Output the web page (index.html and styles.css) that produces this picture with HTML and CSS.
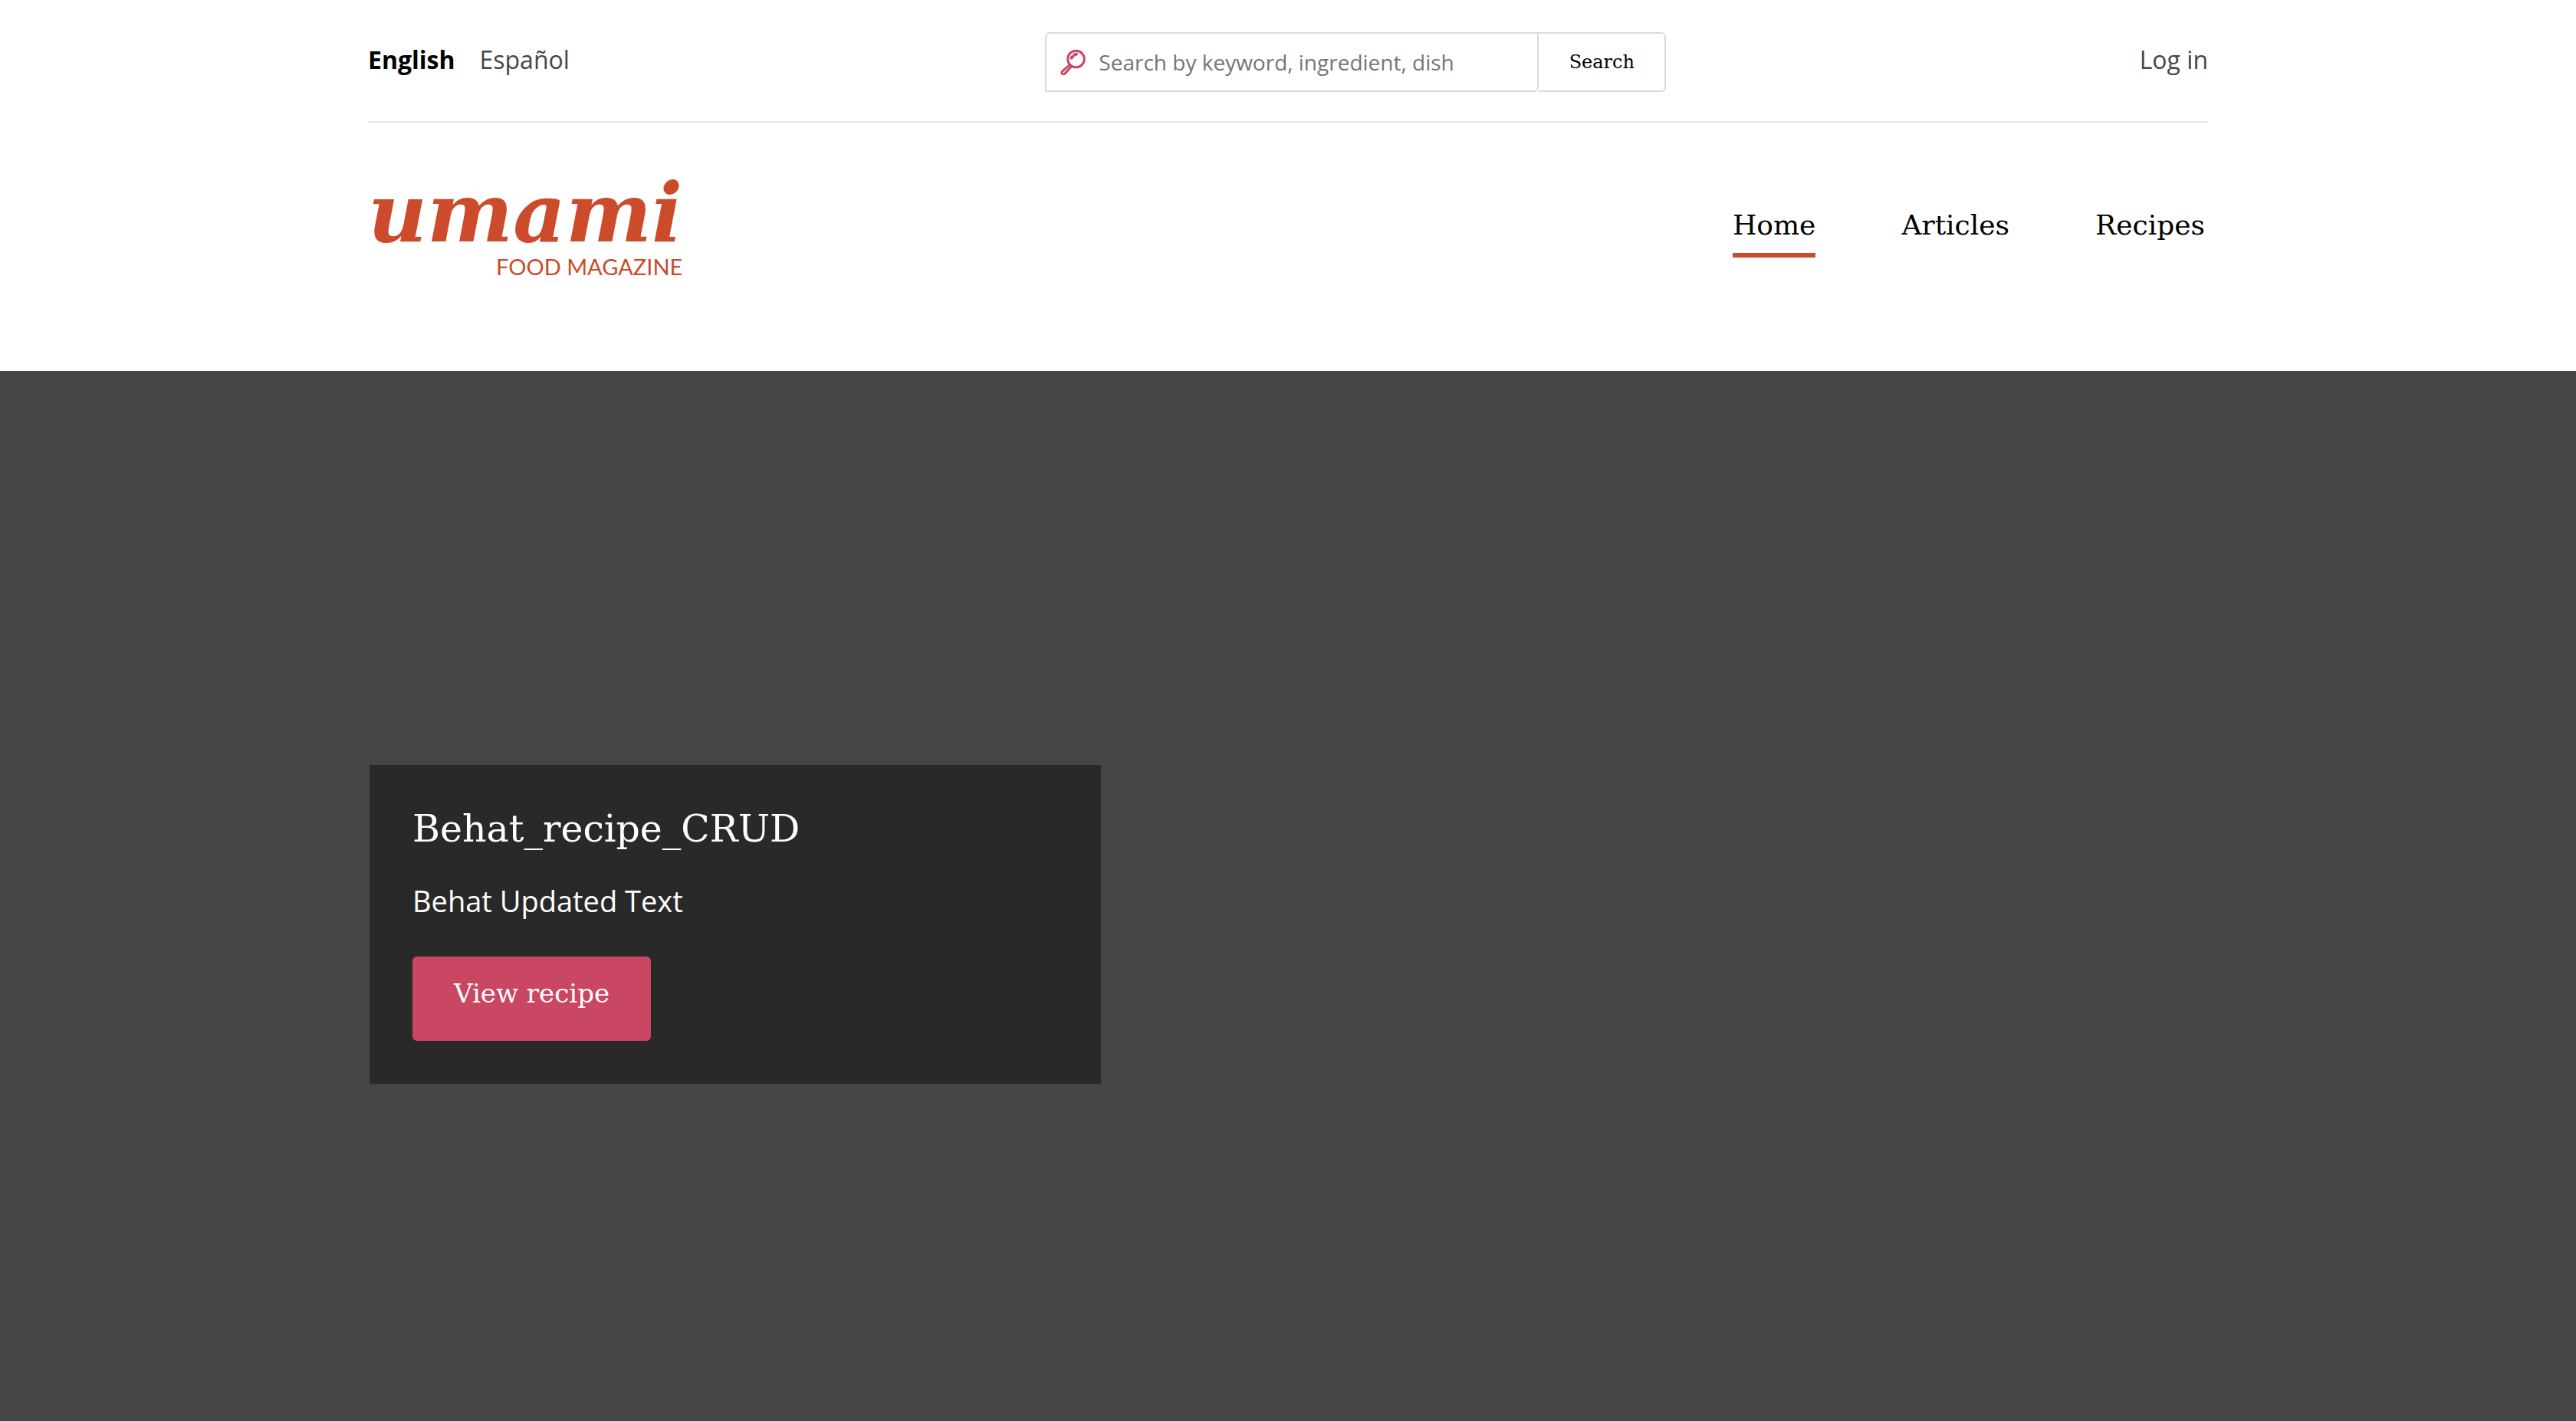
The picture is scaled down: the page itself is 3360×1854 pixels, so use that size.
FILE: index.html
```html
<!DOCTYPE html>
<html lang="en">
<head>
<meta charset="utf-8">
<title>Home | Umami Food Magazine</title>
<link rel="stylesheet" href="styles.css">
</head>
<body>
<header class="header">
  <div class="topbar">
    <nav class="languages" aria-label="Language">
      <a class="language language-active" href="#" lang="en">English</a>
      <a class="language" href="#" lang="es">Español</a>
    </nav>
    <form class="search" role="search">
      <label class="search-field">
        <svg class="search-icon" viewBox="0 0 34 34" aria-hidden="true">
          <circle cx="20.500" cy="13" r="10.800"/>
          <path d="M12.300 20.700 2.500 29a2.200 2.200 0 0 0 3.300 3.200l9-9.800"/>
          <path class="search-shine" d="M14.500 11.500l1.500-1.500M18.500 7.500l2.500-.8"/>
        </svg>
        <input class="search-input" type="search" placeholder="Search by keyword, ingredient, dish" aria-label="Search by keyword, ingredient, dish">
      </label>
      <button class="search-button" type="submit">Search</button>
    </form>
    <a class="login" href="#">Log in</a>
  </div>
  <div class="masthead">
    <a class="brand" href="#">
      <span class="brand-name">umami</span>
      <span class="brand-tag">FOOD MAGAZINE</span>
    </a>
    <nav class="menu" aria-label="Main navigation">
      <a class="menu-link menu-active" href="#">Home</a>
      <a class="menu-link" href="#">Articles</a>
      <a class="menu-link" href="#">Recipes</a>
    </nav>
  </div>
</header>
<main class="hero">
  <section class="card">
    <h1 class="card-title">Behat_recipe_CRUD</h1>
    <p class="card-text">Behat Updated Text</p>
    <a class="card-button" href="#">View recipe</a>
  </section>
</main>
</body>
</html>
```
FILE: styles.css
```css
:root {
  --slab: "DejaVu Serif", serif;
  --sans: "Open Sans", sans-serif;
  --orange: #cb4b2a;
  --pink: #c94762;
}

* {
  box-sizing: border-box;
}

body {
  display: flex;
  flex-direction: column;
  min-height: 100vh;
  margin: 0;
  background: #fff;
  color: #464646;
  font: 32px/48px var(--sans);
}

a {
  color: inherit;
  text-decoration: none;
}

.header {
  padding: 0 calc(100% / 7) 120px;
}

.topbar {
  display: grid;
  grid-template-columns: 5fr 810px 4fr;
  padding: 42px 0 38px;
  border-bottom: 2px solid #e7ebdf;
}

.languages,
.login {
  padding-top: 12px;
}

.languages {
  display: flex;
  gap: 32px;
}

.language-active {
  color: #000;
  font-weight: 700;
}

.search {
  display: flex;
  height: 78px;
}

.search-field {
  display: flex;
  flex: 1;
  align-items: center;
  gap: 16px;
  padding: 0 18px;
  border: 2px solid #dadada;
  border-radius: 6px 0 6px 0;
}

.search-icon {
  width: 34px;
  height: 34px;
  fill: none;
  stroke: var(--pink);
  stroke-width: 3;
}

.search-shine {
  stroke-width: 4;
  stroke-linecap: round;
}

.search-input {
  flex: 1;
  min-width: 0;
  padding: 0;
  border: 0;
  outline: 0;
  background: none;
  color: #464646;
  font: 28px/40px var(--sans);
}

.search-input::placeholder {
  color: #757575;
}

.search-button {
  width: 166px;
  padding: 0;
  border: 2px solid #dadada;
  border-left: 0;
  border-radius: 0 6px 6px 0;
  background: #fff;
  color: #000;
  font: 24px/40px var(--slab);
}

.login {
  justify-self: end;
}

.masthead {
  display: flex;
  justify-content: space-between;
  align-items: flex-start;
  padding-top: 68px;
}

.brand {
  display: flex;
  flex-direction: column;
  align-items: flex-end;
  gap: 4px;
  color: var(--orange);
}

.brand-name {
  font: italic 700 106px/100px var(--slab);
}

.brand-tag {
  font: 29px/32px "Lato", sans-serif;
}

.menu {
  display: flex;
  gap: 112px;
  padding: 36px 4px 0 0;
}

.menu-link {
  padding-bottom: 6px;
  border-bottom: 6px solid transparent;
  color: #000;
  font: 36px/60px var(--slab);
}

.menu-active {
  border-color: var(--orange);
}

.hero {
  flex: 1;
  padding: 514px calc(100% / 7);
  background: #464646;
}

.card {
  width: calc(40% - 6px);
  margin-left: 2px;
  padding: 54px 56px 56px;
  background: #292929;
  color: #fff;
}

.card-title {
  margin: 0 0 34px;
  font: 49px/60px var(--slab);
}

.card-text {
  margin: 0 0 44px;
  font: 38px/58px var(--sans);
}

.card-button {
  display: inline-block;
  padding: 24px 54px 38px;
  border-radius: 6px;
  background: var(--pink);
  font: 34px/48px var(--slab);
}
```
